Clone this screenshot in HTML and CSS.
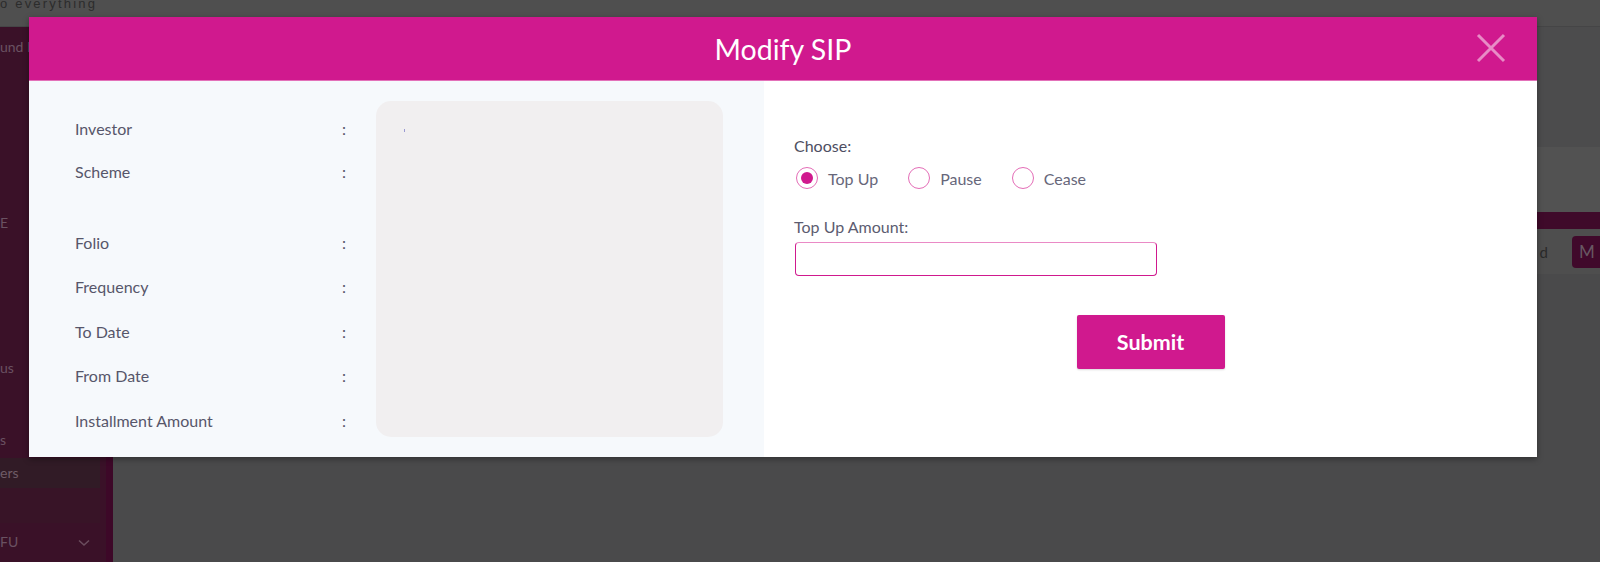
FILE: index.html
```html
<!DOCTYPE html>
<html>
<head>
<meta charset="utf-8">
<title>Modify SIP</title>
<link rel="stylesheet" href="styles.css">
</head>
<body>
<div class="page">
  <div class="topbar"><span class="topbar-text">o everything</span></div>
  <div class="layout">
    <aside class="sidebar">
      <div class="sb-item sb-first">und D</div>
      <div class="sb-item sb-e">E</div>
      <div class="sb-item sb-us">us</div>
      <div class="sb-item sb-s">s</div>
      <div class="sb-item sb-active">ers</div>
      <div class="sb-sub"></div>
      <div class="sb-item sb-fu"><span>FU</span>
        <svg class="chev" width="12" height="8" viewBox="0 0 12 8"><path d="M1 1.5 L6 6 L11 1.5" fill="none" stroke="#6a4c5d" stroke-width="1.6"/></svg>
      </div>
    </aside>
    <main class="main">
      <div class="band1"></div>
      <div class="band2"></div>
      <div class="strip"></div>
      <div class="toolbar"><span class="tb-text">d</span><span class="tb-btn">M</span></div>
    </main>
  </div>

  <div class="modal">
    <div class="modal-header">
      <h1 class="modal-title">Modify SIP</h1>
      <svg class="close" width="30" height="30" viewBox="0 0 30 30"><path d="M2 2 L28 28 M28 2 L2 28" stroke="#e88cc6" stroke-width="3" fill="none"/></svg>
    </div>
    <div class="modal-body">
      <section class="details">
        <div class="labels">
          <div class="row"><span class="label">Investor</span><span class="colon">:</span></div>
          <div class="row row-tall"><span class="label">Scheme</span><span class="colon">:</span></div>
          <div class="row"><span class="label">Folio</span><span class="colon">:</span></div>
          <div class="row"><span class="label">Frequency</span><span class="colon">:</span></div>
          <div class="row"><span class="label">To Date</span><span class="colon">:</span></div>
          <div class="row"><span class="label">From Date</span><span class="colon">:</span></div>
          <div class="row"><span class="label">Installment Amount</span><span class="colon">:</span></div>
        </div>
        <div class="values"><span class="mark"></span></div>
      </section>
      <section class="form">
        <div class="field-label">Choose:</div>
        <div class="radios">
          <label class="radio"><span class="dot checked"></span><span class="radio-text">Top Up</span></label>
          <label class="radio"><span class="dot"></span><span class="radio-text">Pause</span></label>
          <label class="radio"><span class="dot"></span><span class="radio-text">Cease</span></label>
        </div>
        <div class="field-label amount-label">Top Up Amount:</div>
        <div class="input"></div>
        <div class="actions"><button class="submit">Submit</button></div>
      </section>
    </div>
  </div>
</div>
</body>
</html>
```
FILE: styles.css
```css
* { box-sizing: border-box; }
html, body { margin: 0; padding: 0; }
body {
  width: 1600px;
  height: 562px;
  overflow: hidden;
  background: #4a4a4b;
  font-family: Lato, "Open Sans", sans-serif;
}
.page { position: relative; width: 1600px; height: 562px; }

.topbar {
  height: 27px;
  background: #4f4f4f;
  border-bottom: 1px solid #454546;
  overflow: hidden;
}
.topbar-text {
  display: block;
  margin-top: -4px;
  font-family: "Liberation Sans", sans-serif;
  font-size: 13px;
  letter-spacing: 2.2px;
  color: #2c2c2c;
  line-height: 16px;
}

.layout { display: flex; height: 535px; }
.sidebar {
  width: 113px;
  background: #3a1128;
  border-right: 7px solid #3d0828;
  font-size: 14px;
  color: #6a5262;
}
.sb-item { height: 30px; line-height: 30px; white-space: nowrap; }
.sb-first { margin-top: 5px; }
.sb-e { margin-top: 146px; }
.sb-us { margin-top: 115px; }
.sb-s { margin-top: 42px; }
.sb-active { margin-top: 3px; background: #311b26; width: 100px; color: #6f5c67; }
.sb-sub { height: 35px; width: 100px; background: #381427; }
.sb-fu { margin-top: 4px; display: flex; align-items: center; justify-content: space-between; width: 90px; }
.chev { margin-top: 2px; }

.main { flex: 1; }
.band1 { height: 120px; background: #4c4c4d; }
.band2 { height: 65px; background: #525252; }
.strip { height: 17px; background: #3f0a2a; }
.toolbar {
  height: 45px;
  background: #4e4e4e;
  display: flex;
  align-items: center;
  justify-content: flex-end;
  gap: 24px;
}
.tb-text { font-size: 15px; color: #2a2a2a; }
.tb-btn {
  width: 28px; height: 32px;
  background: #40092b;
  border-radius: 4px 0 0 4px;
  color: #685862;
  font-size: 17px;
  line-height: 32px;
  padding-left: 7px;
}

/* modal overlay */
.modal {
  position: absolute;
  left: 29px;
  top: 17px;
  width: 1508px;
  height: 440px;
  background: #fff;
  box-shadow: 0 2px 6px rgba(0,0,0,0.35);
  display: flex;
  flex-direction: column;
}
.modal-header {
  position: relative;
  flex: none;
  height: 64px;
  background: #d0198e;
  border-bottom: 1px solid #e371b9;
  display: flex;
  align-items: center;
  justify-content: center;
}
.modal-title {
  margin: 0;
  font-size: 28.5px;
  font-weight: 400;
  color: #fff;
  line-height: 34px;
}
.close { position: absolute; right: 31px; top: 16px; }

.modal-body { flex: none; height: 376px; display: flex; overflow: hidden; }
.details {
  width: 735px;
  background: #f6f9fc;
  display: flex;
  padding: 20px 41px 20px 46px;
}
.labels { width: 301px; padding-top: 5px; }
.row {
  height: 44.4px;
  display: flex;
  align-items: center;
  font-size: 16px;
  color: #56566a;
}
.row-tall { height: 70px; align-items: flex-start; padding-top: 12px; }
.label { width: 267px; }
.colon { width: 10px; }
.values {
  flex: 1;
  background: #f1eff0;
  border-radius: 15px;
  padding: 28px 0 0 28px;
}
.mark { display: block; width: 1px; height: 3px; background: #9a9ad2; }

.form {
  flex: 1;
  background: #fff;
  padding: 55px 0 0 30px;
  display: flex;
  flex-direction: column;
}
.field-label { font-size: 16px; line-height: 20px; color: #4e4e62; }
.radios { display: flex; margin-top: 11px; height: 22px; align-items: center; }
.radio { display: flex; align-items: center; margin-right: 28px; }
.dot {
  width: 22px; height: 22px;
  border: 1.5px solid #e46db7;
  border-radius: 50%;
  display: flex; align-items: center; justify-content: center;
  margin-left: 2px;
}
.dot.checked::after {
  content: "";
  width: 12px; height: 12px;
  border-radius: 50%;
  background: #d0198e;
}
.radio-text { margin-left: 10px; font-size: 16px; color: #67677a; }
.amount-label { margin-top: 28px; color: #5c5c70; }
.input {
  margin-top: 5px;
  width: 362px;
  height: 34px;
  border: 1px solid #d0198e;
  border-top-color: #ea8ac6;
  border-radius: 4px;
  margin-left: 1px;
}
.actions { display: flex; justify-content: center; margin-top: 39px; margin-left: -30px; }
.submit {
  width: 148px;
  height: 54px;
  background: #d0198e;
  border: none;
  border-radius: 2px;
  color: #fff;
  font-family: Lato, sans-serif;
  font-weight: 700;
  font-size: 21.5px;
  box-shadow: 0 1px 2px rgba(0,0,0,0.15);
}
```
